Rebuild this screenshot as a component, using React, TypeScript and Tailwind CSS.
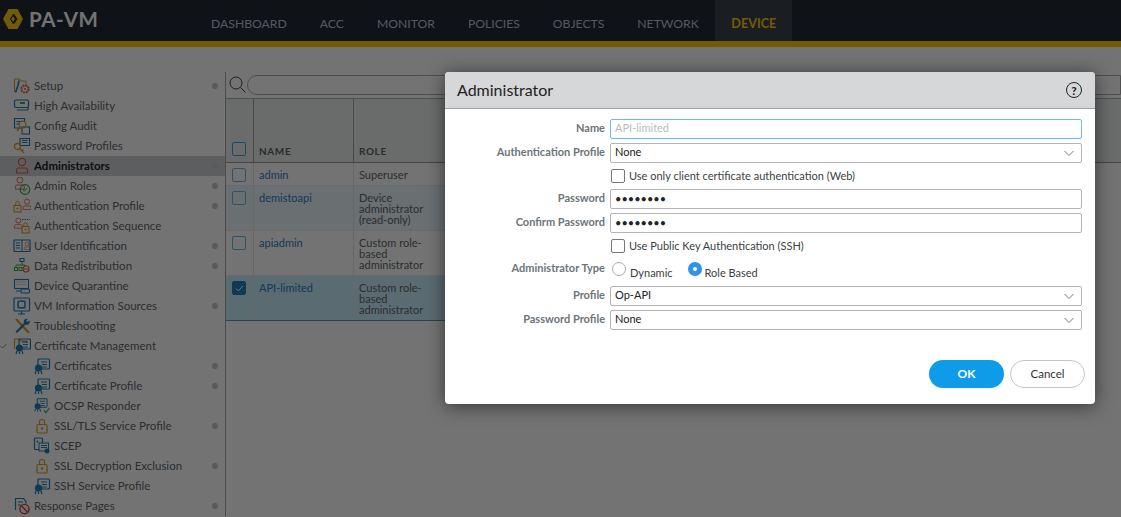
const BLUE = '#1f7fb5'
const ORANGE = '#e0603a'
const GOLD = '#d9a02e'
const GREEN = '#3fae49'

function Svg({ children }: { children: React.ReactNode }) {
  return (
    <svg width="18" height="18" viewBox="0 0 18 18" fill="none" strokeWidth="1" className="shrink-0">
      {children}
    </svg>
  )
}

function Cert({ x = 0 }: { x?: number }) {
  return (
    <g transform={`translate(${x} 0)`}>
      <rect x="5" y="2" width="11.5" height="10" rx="1" stroke={BLUE} strokeWidth="1.2" />
      <path d="M8 5h6M9 7.5h5M9 10h5" stroke={BLUE} />
      <circle cx="5.5" cy="11" r="3.6" fill={BLUE} />
      <path d="M3 14l-1 3M5.5 14.5v2.5M8 14l1 3" stroke={BLUE} strokeWidth="1.2" />
    </g>
  )
}

function Lock() {
  return (
    <>
      <rect x="4" y="7.5" width="10" height="8.5" rx="1" stroke={GOLD} strokeWidth="1.2" />
      <path d="M6.5 7.5V5a2.5 2.5 0 0 1 5 0v2.5" stroke={GOLD} strokeWidth="1.2" />
      <circle cx="9" cy="11.5" r="1.2" fill={GOLD} />
    </>
  )
}

function Person({ x = 0, y = 0, s = 1 }: { x?: number; y?: number; s?: number }) {
  return (
    <g transform={`translate(${x} ${y}) scale(${s})`} stroke={ORANGE} strokeWidth="1.1">
      <circle cx="9" cy="5" r="3.6" />
      <path d="M3.5 16v-3a2 2 0 0 1 2-2h7a2 2 0 0 1 2 2v3z" />
    </g>
  )
}

const icons: Record<string, React.ReactNode> = {
  setup: (
    <>
      <path d="M1.5 15V2h5l1.5 2h5v4" stroke={GOLD} />
      <path d="M6 3.5l-1 5 -2.5 7" stroke={BLUE} strokeWidth="1.6" />
      <circle cx="12" cy="12" r="3.6" stroke={ORANGE} strokeWidth="2" strokeDasharray="2 0.8" />
      <circle cx="12" cy="12" r="1" fill={ORANGE} />
    </>
  ),
  ha: (
    <>
      <rect x="1.5" y="3" width="14" height="7.5" rx="1.5" stroke={BLUE} strokeWidth="1.2" />
      <rect x="7" y="5" width="5" height="2" fill={GREEN} />
      <path d="M4 13h11M15 10v3" stroke={BLUE} strokeWidth="1.2" />
    </>
  ),
  audit: (
    <>
      <path d="M8 11H1.5V1.5h10v3" stroke={BLUE} strokeWidth="1.2" />
      <path d="M3.5 4.5h5M3.5 7h3" stroke={BLUE} />
      <rect x="9" y="10" width="7.5" height="7" stroke={BLUE} strokeWidth="1.1" />
      <circle cx="9.5" cy="7.5" r="3.4" stroke={GOLD} strokeWidth="1.2" />
      <path d="M7 10.5l-3 3.5" stroke={GOLD} strokeWidth="1.4" />
    </>
  ),
  key: (
    <>
      <rect x="7" y="1.5" width="9.5" height="7" stroke={BLUE} strokeWidth="1.1" />
      <path d="M9 3.5h5.5M9 5.5h5.5" stroke={BLUE} />
      <circle cx="4.5" cy="9.5" r="3" stroke={GOLD} strokeWidth="1.3" />
      <path d="M6.5 11.5l4.5 4.5M9 14l1.5-1.5" stroke={GOLD} strokeWidth="1.3" />
    </>
  ),
  admin: <Person />,
  roles: (
    <>
      <Person x={-0.5} y={-1} s={0.82} />
      <circle cx="12" cy="12.5" r="4.8" stroke={GREEN} strokeWidth="1.2" fill="none" />
      <path d="M9.8 12.5l1.6 1.7 2.8-3" stroke={GREEN} />
    </>
  ),
  authProfile: (
    <>
      <rect x="1" y="8.5" width="7" height="6.5" stroke={GOLD} strokeWidth="1.1" />
      <path d="M2.8 8.5V6a1.7 1.7 0 0 1 3.4 0v2.5" stroke={GOLD} />
      <circle cx="4.5" cy="11.5" r="1" fill={GOLD} />
      <Person x={7.5} y={1} s={0.72} />
    </>
  ),
  authSeq: (
    <>
      <Person x={-1} y={0} s={0.7} />
      <rect x="9" y="9.5" width="7" height="6.5" stroke={GOLD} strokeWidth="1.1" />
      <path d="M10.8 9.5V7.5a1.7 1.7 0 0 1 3.4 0v2" stroke={GOLD} />
      <circle cx="12.5" cy="12.5" r="1" fill={GOLD} />
      <path d="M9 2.5h8" stroke={BLUE} strokeDasharray="1.5 1" />
    </>
  ),
  userId: (
    <>
      <rect x="1" y="3" width="16" height="11.5" rx="0.5" stroke={BLUE} strokeWidth="1.2" />
      <path d="M9 3v11.5M3 6h4M3 8.5h4M3 11h4" stroke={BLUE} />
      <Person x={9.5} y={4.5} s={0.5} />
    </>
  ),
  redist: (
    <>
      <rect x="7" y="1.5" width="4" height="3" stroke={BLUE} />
      <path d="M9 4.5V8M3 10V8h9v2" stroke={GREEN} />
      <rect x="1.5" y="10.5" width="3" height="3" stroke={GREEN} />
      <rect x="6" y="10.5" width="3" height="3" stroke={GREEN} />
      <circle cx="13" cy="12" r="3" stroke={ORANGE} strokeWidth="1.1" />
      <path d="M11 12h4" stroke={ORANGE} />
    </>
  ),
  quarantine: (
    <>
      <rect x="1.5" y="2.5" width="14" height="9" stroke={BLUE} strokeWidth="1.1" />
      <path d="M3.5 5h10M3.5 7.5h10" stroke="#9aa3a8" strokeDasharray="1 1" />
      <rect x="8" y="12" width="8.5" height="4" rx="1" stroke={BLUE} strokeWidth="1.1" />
      <path d="M3 14h4" stroke={BLUE} />
    </>
  ),
  vm: (
    <>
      <rect x="1" y="1" width="15.5" height="13" rx="1" stroke={BLUE} strokeWidth="1.2" />
      <circle cx="8.5" cy="7.5" r="3.6" stroke={BLUE} />
      <rect x="5" y="4" width="7" height="7" stroke={BLUE} />
      <path d="M8.5 14v2.5M5 17h7" stroke={BLUE} strokeWidth="1.2" />
    </>
  ),
  tools: (
    <>
      <path d="M3 2l13 14" stroke={GOLD} strokeWidth="2.4" />
      <path d="M15 2a3 3 0 0 0-4 4L2.5 14.5 4 16 12.5 7.5a3 3 0 0 0 4-4l-2 1.5-1.5-1.5z" fill={BLUE} />
    </>
  ),
  certFolder: (
    <>
      <path d="M1.5 12V2h5l1.5 2h6v2" stroke={GOLD} strokeWidth="1.1" />
      <Cert x={1} />
    </>
  ),
  cert: <Cert />,
  ocsp: (
    <>
      <g transform="scale(0.85)">
        <Cert />
      </g>
      <path d="M11 13.5l2 2 3.5-4.5" stroke={GREEN} strokeWidth="1.2" />
    </>
  ),
  lock: <Lock />,
  scep: (
    <>
      <rect x="1.5" y="1" width="8" height="11.5" rx="1" stroke={BLUE} strokeWidth="1.2" />
      <circle cx="4.5" cy="4.5" r="1" fill={BLUE} />
      <rect x="6" y="6" width="9.5" height="8" fill="#fff" stroke={BLUE} />
      <path d="M8 8.5h6M8 10.5h6" stroke={BLUE} />
      <circle cx="14" cy="14" r="2.5" fill={BLUE} />
    </>
  ),
  response: (
    <>
      <path d="M2.5 13V1.5h8l2.5 3v2" stroke={BLUE} strokeWidth="1.2" />
      <path d="M5 5h5M5 8h3" stroke={BLUE} />
      <circle cx="11.5" cy="12" r="4.6" stroke="#d83a3a" strokeWidth="1.4" />
      <path d="M8.4 8.8l6.3 6.4" stroke="#d83a3a" strokeWidth="1.4" />
    </>
  ),
}

const menu = [
  { label: 'Setup', icon: 'setup', dot: true },
  { label: 'High Availability', icon: 'ha' },
  { label: 'Config Audit', icon: 'audit' },
  { label: 'Password Profiles', icon: 'key' },
  { label: 'Administrators', icon: 'admin', dot: true, active: true },
  { label: 'Admin Roles', icon: 'roles', dot: true },
  { label: 'Authentication Profile', icon: 'authProfile', dot: true },
  { label: 'Authentication Sequence', icon: 'authSeq' },
  { label: 'User Identification', icon: 'userId', dot: true },
  { label: 'Data Redistribution', icon: 'redist', dot: true },
  { label: 'Device Quarantine', icon: 'quarantine' },
  { label: 'VM Information Sources', icon: 'vm', dot: true },
  { label: 'Troubleshooting', icon: 'tools' },
  { label: 'Certificate Management', icon: 'certFolder', open: true },
  { label: 'Certificates', icon: 'cert', dot: true, sub: true },
  { label: 'Certificate Profile', icon: 'cert', dot: true, sub: true },
  { label: 'OCSP Responder', icon: 'ocsp', sub: true },
  { label: 'SSL/TLS Service Profile', icon: 'lock', dot: true, sub: true },
  { label: 'SCEP', icon: 'scep', sub: true },
  { label: 'SSL Decryption Exclusion', icon: 'lock', dot: true, sub: true },
  { label: 'SSH Service Profile', icon: 'cert', sub: true },
  { label: 'Response Pages', icon: 'response', dot: true },
]

const admins = [
  { name: 'admin', role: ['Superuser'], h: 'h-[23px]', bg: 'bg-white' },
  { name: 'demistoapi', role: ['Device', 'administrator', '(read-only)'], h: 'h-[45px]', bg: 'bg-[#eaf7fc]' },
  { name: 'apiadmin', role: ['Custom role-', 'based', 'administrator'], h: 'h-[45px]', bg: 'bg-white' },
  { name: 'API-limited', role: ['Custom role-', 'based', 'administrator'], h: 'h-[45px]', bg: 'bg-[#c8eefc]', checked: true },
]

function TableCheck({ checked, head }: { checked?: boolean; head?: boolean }) {
  return (
    <span
      className={`flex h-[14px] w-[14px] items-center justify-center rounded-[2px] border-[1.5px] ${
        checked ? 'border-[#1f82bd] bg-[#1f82bd]' : head ? 'border-[#3f9fdc]' : 'border-[#6cb6e0]'
      }`}
    >
      {checked && (
        <svg width="9" height="9" viewBox="0 0 9 9" fill="none">
          <path d="M1 4.5l2.4 2.4L8 1.8" stroke="#fff" strokeWidth="1" />
        </svg>
      )}
    </span>
  )
}

function Sidebar() {
  return (
    <aside className="w-[226px] shrink-0 border-r border-[#a8a8a8] pt-1">
      {menu.map((item) => (
        <div
          key={item.label}
          className={`relative flex h-5 items-center pr-[7px] ${item.sub ? 'pl-[33px]' : 'pl-[13px]'} ${
            item.active ? 'bg-[#cfd1d3]' : ''
          }`}
        >
          {item.open && (
            <svg width="7" height="6" viewBox="0 0 7 6" fill="none" className="absolute left-0 top-[7px]">
              <path d="M0.5 3l2 2L6.5 1" stroke="#8a8a8a" />
            </svg>
          )}
          <Svg>{icons[item.icon]}</Svg>
          <span
            className={`ml-[3px] flex-1 truncate text-[11.5px] ${
              item.active ? 'font-bold text-[#222]' : 'text-[#62676c]'
            }`}
          >
            {item.label}
          </span>
          {item.dot && <span className="h-[6px] w-[6px] rounded-full bg-[#c8c8c8]" />}
        </div>
      ))}
    </aside>
  )
}

function AdminTable() {
  return (
    <main className="min-w-0 flex-1">
      <div className="flex h-[28px] items-center gap-[1px] border-b border-[#b0b0b0] pl-[3px]">
        <svg width="17" height="17" viewBox="0 0 17 17" fill="none" className="shrink-0">
          <circle cx="7" cy="7" r="6" stroke="#444" />
          <path d="M11.5 11.5l5 5" stroke="#444" />
        </svg>
        <div className="h-5 flex-1 rounded-l-full border border-[#b0b0b0]" />
      </div>
      <div className="flex h-[64px] border-b border-[#999] bg-[#eceeee]">
        <div className="flex w-[28px] shrink-0 items-end border-r border-[#a0a0a0] pb-[6px] pl-[6px]">
          <TableCheck head />
        </div>
        <div className="flex w-[100px] shrink-0 items-end border-r border-[#a0a0a0] pb-[3px] pl-[5px] text-[10px] font-bold tracking-[0.06em] text-[#5e6266]">
          NAME
        </div>
        <div className="flex flex-1 items-end pb-[3px] pl-[5px] text-[10px] font-bold tracking-[0.06em] text-[#5e6266]">
          ROLE
        </div>
      </div>
      <div className="w-[860px]">
        {admins.map((row) => (
          <div key={row.name} className={`flex ${row.h} border-b ${row.checked ? 'border-[#5f95ad]' : 'border-[#e8eaeb]'} ${row.bg}`}>
            <div className="w-[28px] shrink-0 border-r border-[#e3e5e6] pl-[6px] pt-[5px]">
              <TableCheck checked={row.checked} />
            </div>
            <div className="w-[100px] shrink-0 border-r border-[#e3e5e6] pl-[5px] pt-[6px] text-[11px] leading-[11px] text-[#2a80c8]">
              {row.name}
            </div>
            <div className="flex-1 pl-[5px] pt-[6px] text-[11px] leading-[11px] text-[#63676b]">
              {row.role.map((line) => (
                <div key={line}>{line}</div>
              ))}
            </div>
          </div>
        ))}
      </div>
    </main>
  )
}

function FieldLabel({ children }: { children: React.ReactNode }) {
  return <label className="w-[165px] shrink-0 pb-[2px] pr-[5px] text-right text-[11px] font-bold text-[#6d7479]">{children}</label>
}

function TextBox({ value, focus, muted }: { value: string; focus?: boolean; muted?: boolean }) {
  return (
    <div
      className={`flex h-5 w-[472px] items-center rounded-[2px] border pl-1 text-[11px] ${focus ? 'border-[#67bdec]' : 'border-[#b4b4b8]'} ${
        muted ? 'pb-[2px] text-[#b6bcc1]' : 'text-[#222]'
      }`}
    >
      {value}
    </div>
  )
}

function SelectBox({ value }: { value: string }) {
  return (
    <div className="flex h-5 w-[472px] items-center justify-between rounded-[2px] border border-[#b4b4b8] pb-[2px] pl-1 pr-[6px] text-[11px] text-[#222]">
      {value}
      <svg width="12" height="7" viewBox="0 0 12 7" fill="none" className="mt-[3px]">
        <path d="M1.5 1l4.5 4.5L10.5 1" stroke="#777" />
      </svg>
    </div>
  )
}

function CheckRow({ label }: { label: string }) {
  return (
    <div className="flex h-[14px] items-center pl-[166px]">
      <span className="h-[14px] w-[14px] rounded-[2px] border border-[#777]" />
      <span className="ml-[4px] text-[11px] text-[#3a3f44]">{label}</span>
    </div>
  )
}

function Row({ label, children }: { label: string; children: React.ReactNode }) {
  return (
    <div className="flex items-center">
      <FieldLabel>{label}</FieldLabel>
      {children}
    </div>
  )
}

function Dialog() {
  return (
    <div className="absolute left-[445px] top-[72px] flex h-[332px] w-[650px] flex-col overflow-hidden rounded-[4px] bg-white shadow-[0_2px_18px_rgba(0,0,0,0.55)]">
      <div className="flex h-[37px] shrink-0 items-center justify-between border-b border-[#9a9da1] bg-[#d6d7d9] pl-3 pr-[13px]">
        <h2 className="text-[16px] text-[#222]">Administrator</h2>
        <span className="flex h-4 w-4 items-center justify-center rounded-full border-[1.5px] border-[#222] text-[11px] font-black leading-none text-[#222]">
          ?
        </span>
      </div>
      <div className="flex flex-col pt-[10px]">
        <Row label="Name">
          <TextBox value="API-limited" focus muted />
        </Row>
        <div className="mt-1">
          <Row label="Authentication Profile">
            <SelectBox value="None" />
          </Row>
        </div>
        <div className="mt-[6px]">
          <CheckRow label="Use only client certificate authentication (Web)" />
        </div>
        <div className="mt-[6px]">
          <Row label="Password">
            <TextBox value="••••••••" />
          </Row>
        </div>
        <div className="mt-1">
          <Row label="Confirm Password">
            <TextBox value="••••••••" />
          </Row>
        </div>
        <div className="mt-[6px]">
          <CheckRow label="Use Public Key Authentication (SSH)" />
        </div>
        <div className="mt-[6px] flex h-[20px] items-center">
          <FieldLabel>Administrator Type</FieldLabel>
          <span className="ml-[2px] h-[14px] w-[14px] rounded-full border border-[#aaa]" />
          <span className="ml-1 mt-[8px] text-[11px] text-[#3a3f44]">Dynamic</span>
          <span className="ml-[15px] flex h-[14px] w-[14px] items-center justify-center rounded-full bg-[#2f93ea]">
            <span className="h-1 w-1 rounded-full bg-white" />
          </span>
          <span className="ml-[3px] mt-[8px] text-[11px] text-[#3a3f44]">Role Based</span>
        </div>
        <div className="mt-[7px]">
          <Row label="Profile">
            <SelectBox value="Op-API" />
          </Row>
        </div>
        <div className="mt-1">
          <Row label="Password Profile">
            <SelectBox value="None" />
          </Row>
        </div>
      </div>
      <div className="mt-[30px] flex justify-end gap-[6px] pr-[10px]">
        <button className="h-7 w-[75px] rounded-full bg-[#0e9be8] text-[12px] font-bold text-white">OK</button>
        <button className="h-7 w-[75px] rounded-full border border-[#c4c4c4] bg-white text-[11.5px] text-[#333]">Cancel</button>
      </div>
    </div>
  )
}

export default function App() {
  const tabs = ['DASHBOARD', 'ACC', 'MONITOR', 'POLICIES', 'OBJECTS', 'NETWORK']
  return (
    <div className="relative h-[517px] w-[1121px] overflow-hidden bg-white font-['Lato',sans-serif]">
      <header className="flex h-[41px] items-stretch bg-[#222833]">
        <div className="flex w-[194.5px] items-center gap-[6px] pl-[3px]">
          <svg width="20" height="20" viewBox="0 0 20 20" className="mb-[3px] shrink-0">
            <path d="M5.5 0h9L20 10l-5.5 10h-9L0 10z" fill="#ffc90f" />
            <path d="M9 5.5h2.5l3 4.5-3 4.5H9l3-4.5z" fill="#222833" />
            <path d="M10 5.5L6.8 10l3.2 4.5h1.2l-3-4.5 3-4.5z" fill="#222833" />
          </svg>
          <span className="mb-[3px] text-[20.5px] font-bold tracking-[0.6px] text-white">PA-VM</span>
        </div>
        <nav className="flex">
          {tabs.map((tab) => (
            <div key={tab} className="flex items-center px-[16.5px] pt-[7px] text-[12.2px] text-[#bfc4cc]">
              {tab}
            </div>
          ))}
          <div className="flex items-center bg-[#3a414b] px-4 pt-[7px] text-[12.6px] font-bold text-[#ffc90f]">DEVICE</div>
        </nav>
      </header>
      <div className="h-[6px] bg-[#ffc90f]" />
      <div className="h-[24px]" />
      <div className="flex h-[446px]">
        <div className="pt-px">
          <Sidebar />
        </div>
        <AdminTable />
      </div>
      <div className="absolute inset-0 bg-black/55" />
      <Dialog />
    </div>
  )
}
